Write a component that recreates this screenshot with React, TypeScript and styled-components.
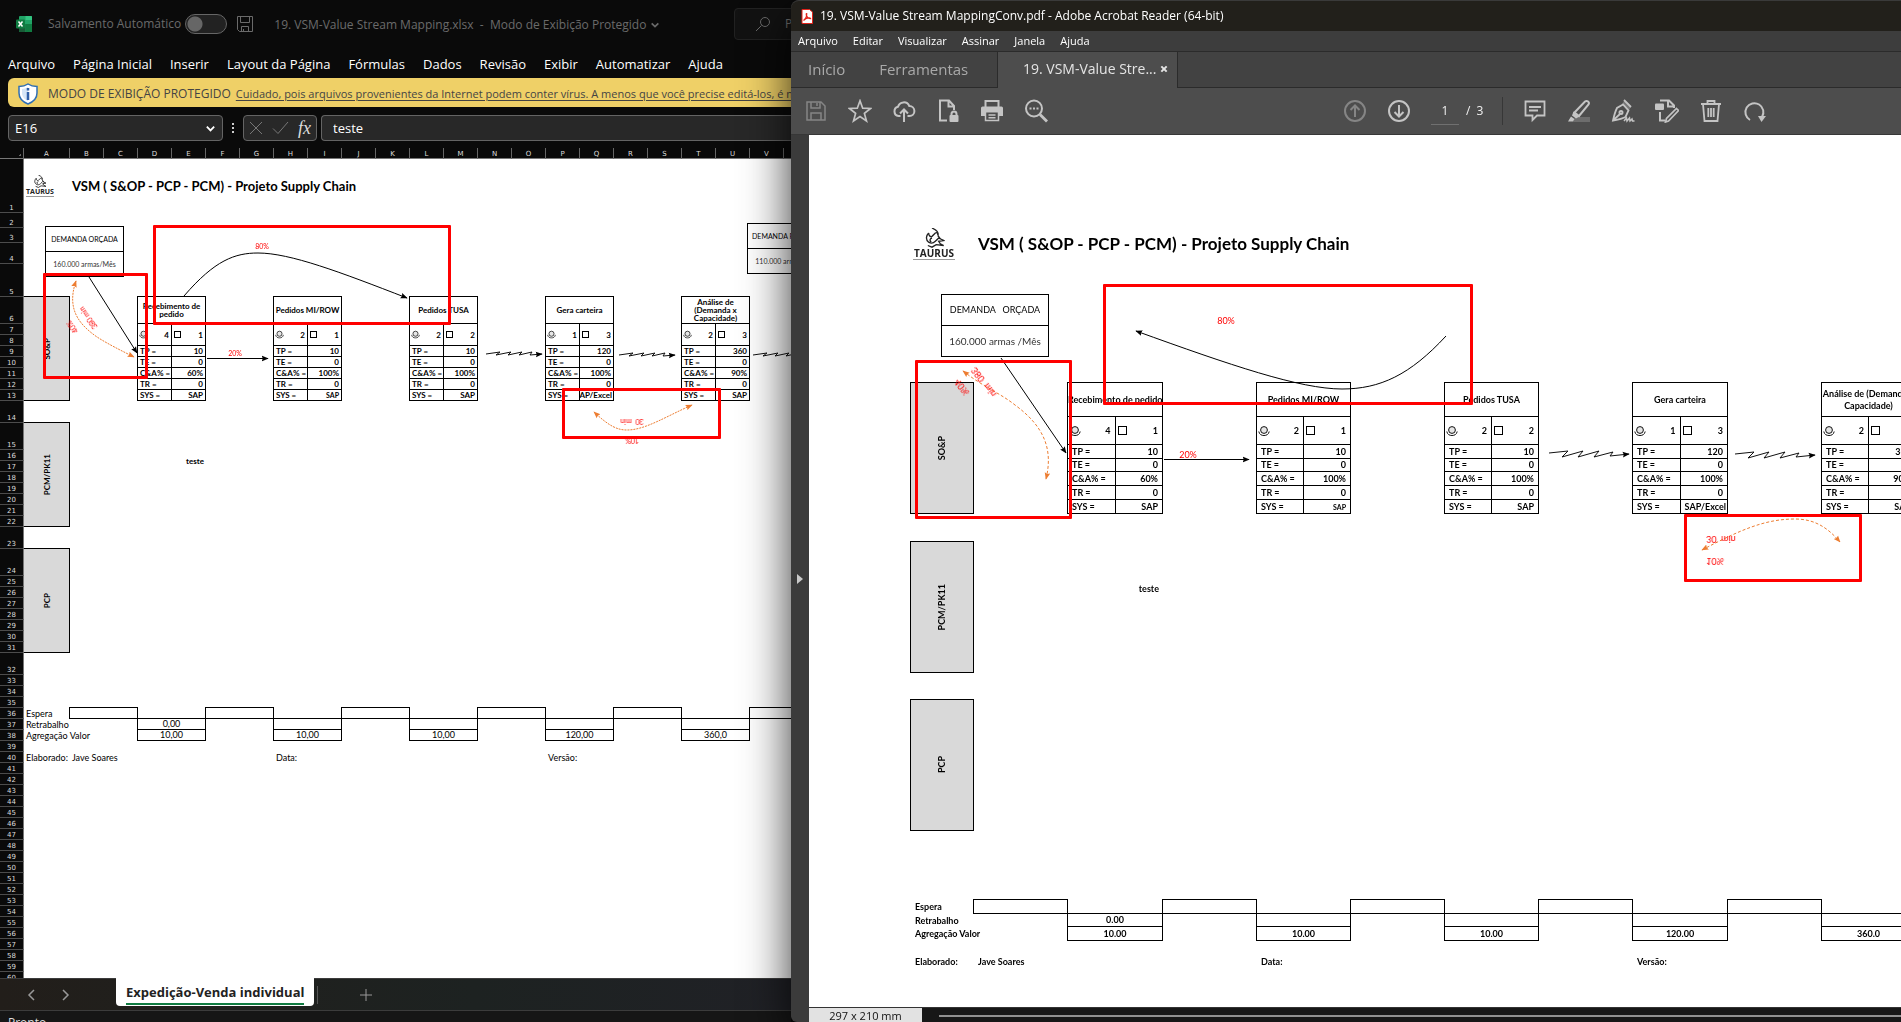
import React from "react";
import styled, { createGlobalStyle, css } from "styled-components";

const ui = `"Open Sans", "Noto Sans", sans-serif`;
const doc = `Lato, "Open Sans", sans-serif`;

const GlobalStyle = createGlobalStyle`
  *, *::before, *::after { box-sizing: border-box; }
  body { margin: 0; background: #0a0a0a; font-family: ${ui}; }
  button, input { font: inherit; color: inherit; }
  h1, h2 { margin: 0; }
`;

const Desktop = styled.div`
  display: grid;
  grid-template-columns: minmax(0, 791fr) minmax(0, 1110fr);
  height: 100vh;
  overflow: hidden;
`;

/* ---------- shared controls ---------- */

const PlainButton = styled.button`
  display: inline-flex;
  align-items: center;
  justify-content: center;
  flex: none;
  padding: 0;
  border: 0;
  background: none;
  white-space: nowrap;
  cursor: pointer;
`;

/* ---------- value stream map ---------- */

interface Process {
  name: string;
  people: number;
  machines: number;
  tp: string;
  ca: string;
  sys: string;
  smallSys?: boolean;
}

const processes: Process[] = [
  { name: "Recebimento de pedido", people: 4, machines: 1, tp: "10", ca: "60%", sys: "SAP" },
  { name: "Pedidos MI/ROW", people: 2, machines: 1, tp: "10", ca: "100%", sys: "SAP", smallSys: true },
  { name: "Pedidos TUSA", people: 2, machines: 2, tp: "10", ca: "100%", sys: "SAP" },
  { name: "Gera carteira", people: 1, machines: 3, tp: "120", ca: "100%", sys: "SAP/Excel" },
  { name: "Análise de (Demanda x Capacidade)", people: 2, machines: 3, tp: "360", ca: "90%", sys: "SAP" },
];

interface Metrics {
  columns: string;
  rows: string;
  tableRows: number[];
  font: number;
  labelWeight: number;
  pad: number;
  title: number;
  titleRow: number;
  logo: number;
  lanes: [string, string][];
  laneEdge: boolean;
  teste: string;
  timeline: number;
  footer: number;
  processRow: string;
  decimal: string;
  icon: number;
  headLine: number;
  heads: Record<number, string>;
}

const sheetMetrics: Metrics = {
  columns: "24px 46px repeat(24, 34px)",
  rows: "54px 15px 15px 21px 33px 27px repeat(7, 11px) 22px 27px repeat(7, 11px) 22px 27px repeat(7, 11px) 22px repeat(28, 11px)",
  tableRows: [27, 22, 11, 11, 11, 11, 11],
  font: 8,
  labelWeight: 400,
  pad: 2,
  title: 13,
  titleRow: 1,
  logo: 28,
  lanes: [["SO&P", "6 / 14"], ["PCM/PK11", "15 / 23"], ["PCP", "24 / 32"]],
  laneEdge: false,
  teste: "16 / 18",
  timeline: 36,
  footer: 40,
  processRow: "6 / 14",
  decimal: ",",
  icon: 9,
  headLine: 8,
  heads: { 0: "Recebimento de\npedido", 4: "Análise de\n(Demanda x\nCapacidade)" },
};

const pdfMetrics: Metrics = {
  columns:
    "102px 63px 47px 47px 47px 48px repeat(10, 47px) 48px 47px repeat(6, 47px)",
  rows: "77px 64px 107px 34px 28px 14px 13px 14px 14px 14px 28px 40px 14px 77px 27px 131px 69px 14px 13px 14px 14px 14px",
  tableRows: [34, 28, 14, 13, 14, 14, 14],
  font: 9,
  labelWeight: 700,
  pad: 4,
  title: 17,
  titleRow: 2,
  logo: 42,
  lanes: [["SO&P", "4 / 11"], ["PCM/PK11", "12 / 15"], ["PCP", "16 / 17"]],
  laneEdge: true,
  teste: "13 / 14",
  timeline: 18,
  footer: 22,
  processRow: "4 / 11",
  decimal: ".",
  icon: 12,
  headLine: 12,
  heads: { 4: "Análise de (Demanda x\nCapacidade)" },
};

const MapGrid = styled.div<{ $m: Metrics }>`
  position: relative;
  display: grid;
  grid-template-columns: ${(p) => p.$m.columns};
  grid-template-rows: ${(p) => p.$m.rows};
  font: 700 ${(p) => p.$m.font}px/10px ${doc};
  color: #000;
`;

const MapTitle = styled.h1<{ $m: Metrics }>`
  grid-area: ${(p) => p.$m.titleRow} / 3 / auto / span 12;
  align-self: center;
  padding-left: ${(p) => p.$m.pad}px;
  font: 700 ${(p) => p.$m.title}px/24px ${doc};
  color: #000;
  white-space: nowrap;
`;

const LogoSlot = styled.div<{ $m: Metrics }>`
  grid-area: ${(p) => p.$m.titleRow} / 2;
  align-self: center;
  padding-left: 2px;
`;

const Lane = styled.div<{ $rows: string; $edge: boolean }>`
  grid-column: 2;
  grid-row: ${(p) => p.$rows};
  display: flex;
  align-items: center;
  justify-content: center;
  margin: -1px 0 0 ${(p) => (p.$edge ? -1 : 0)}px;
  border: 1px solid #000;
  border-left-width: ${(p) => (p.$edge ? 1 : 0)}px;
  background: #d9d9d9;
`;

const LaneName = styled.span`
  writing-mode: vertical-rl;
  transform: rotate(180deg);
`;

const ProcessTable = styled.table<{ $column: number; $rows: string }>`
  grid-column: ${(p) => p.$column} / span 2;
  grid-row: ${(p) => p.$rows};
  margin: -1px 0 0 -1px;
  border: 0 solid #000;
  border-width: 1px 0 0 1px;
  border-collapse: separate;
  border-spacing: 0;
  table-layout: fixed;
  width: calc(100% + 1px);
  font: inherit;
  color: inherit;

  th, td {
    padding: 0;
    border: 0 solid #000;
    border-width: 0 1px 1px 0;
    font-weight: 700;
  }
`;

const TableRow = styled.tr<{ $height: number }>`
  height: ${(p) => p.$height}px;
`;

const HeadCell = styled.th<{ $line: number }>`
  text-align: center;
  vertical-align: middle;
  white-space: pre;
  line-height: ${(p) => p.$line}px;
`;

const Cell = styled.div<{ $pad: number; $end?: boolean; $small?: boolean }>`
  display: flex;
  justify-content: ${(p) => (p.$end ? "flex-end" : "flex-start")};
  padding: 0 ${(p) => p.$pad}px;
  overflow: hidden;
  white-space: nowrap;
  ${(p) => p.$small && css`font-size: 7px;`}
`;

const CountCell = styled.div<{ $pad: number }>`
  display: flex;
  align-items: center;
  justify-content: space-between;
  padding: 0 ${(p) => p.$pad}px 0 1px;
`;

const MachineBox = styled.span<{ $size: number }>`
  width: ${(p) => p.$size}px;
  height: ${(p) => p.$size}px;
  margin-left: 1px;
  border: 1px solid #000;
`;

const StepBox = styled.div<{ $row: number; $column: number; $weight: number }>`
  grid-area: ${(p) => p.$row} / ${(p) => p.$column} / auto / span 2;
  display: flex;
  align-items: center;
  justify-content: center;
  margin: -1px 0 0 -1px;
  border: 1px solid #000;
  font-size: 9px;
  font-weight: ${(p) => p.$weight};
`;

const Label = styled.span<{ $row: number | string; $column: number; $m: Metrics; $end?: boolean }>`
  grid-column: ${(p) => p.$column};
  grid-row: ${(p) => p.$row};
  align-self: center;
  justify-self: ${(p) => (p.$end ? "end" : "start")};
  padding: 0 ${(p) => p.$m.pad}px;
  font-size: ${(p) => (p.$end ? p.$m.font : 9)}px;
  font-weight: ${(p) => (p.$end ? 700 : p.$m.labelWeight)};
  white-space: nowrap;
`;

const Person = ({ size }: { size: number }) => (
  <svg width={size} height={size} viewBox="0 0 12 12" fill="none" stroke="#111">
    <circle cx="6" cy="5" r="3.4" fill="#e6e6e6" />
    <path d="M.8 6.5C1.4 9.6 3.6 10.500 6 10.500s4.6-.9 5.2-4" />
  </svg>
);

const LogoBox = styled.div<{ $width: number }>`
  display: flex;
  flex-direction: column;
  align-items: center;
  width: ${(p) => p.$width}px;
  border-bottom: 1px solid #999;
  font: 700 ${(p) => (p.$width > 30 ? 10 : 7)}px/${(p) => (p.$width > 30 ? 11 : 8)}px "Open Sans", sans-serif;
  color: #222;
`;

const TaurusLogo = ({ width }: { width: number }) => (
  <LogoBox $width={width}>
    <svg width={width / 2} height={width / 2 - 1} viewBox="0 0 24 24" fill="none" stroke="#222" strokeWidth="1.6">
      <path d="M9 0c6 3 8 5 7 9M5 6C2 9 1 14 5 17c3 2 6 1 8-1l4-4 6 3-6 1 2 3 4 2-9-1-5 3-5-2" />
      <path d="M5 6c0 3 2 5 4 4l4-4c2-1 3 0 3 2M8 17c-2-2-2-4 1-5M16 9l3 4" />
    </svg>
    TAURUS
  </LogoBox>
);

function ValueStream({ m }: { m: Metrics }) {
  const n = (v: string) => v.replace(".", m.decimal);
  const [head, counts, ...rest] = m.tableRows;
  const finals = ["10.00", "10.00", "10.00", "120.00", "360.0"].map(n);
  return (
    <>
      <LogoSlot $m={m}><TaurusLogo width={m.logo} /></LogoSlot>
      <MapTitle $m={m}>VSM ( S&OP - PCP - PCM) - Projeto Supply Chain</MapTitle>
      {m.lanes.map(([name, rows]) => (
        <Lane key={name} $rows={rows} $edge={m.laneEdge}><LaneName>{name}</LaneName></Lane>
      ))}
      {processes.map((p, i) => {
        const data = [["TP =", p.tp], ["TE =", "0"], ["C&A% =", p.ca], ["TR =", "0"], ["SYS =", p.sys]];
        return (
          <ProcessTable key={p.name} $column={5 + 4 * i} $rows={m.processRow}>
            <tbody>
              <TableRow $height={head}>
                <HeadCell colSpan={2} $line={m.headLine}>{m.heads[i] ?? p.name}</HeadCell>
              </TableRow>
              <TableRow $height={counts}>
                <td><CountCell $pad={m.pad}><Person size={m.icon} />{p.people}</CountCell></td>
                <td><CountCell $pad={m.pad}><MachineBox $size={m.icon > 9 ? 9 : 7} />{p.machines}</CountCell></td>
              </TableRow>
              {data.map(([k, v], r) => (
                <TableRow key={k} $height={rest[r]}>
                  <td><Cell $pad={m.pad}>{k}</Cell></td>
                  <td><Cell $pad={v.length > 6 ? 1 : m.pad} $end $small={r === 4 && p.smallSys}>{v}</Cell></td>
                </TableRow>
              ))}
            </tbody>
          </ProcessTable>
        );
      })}
      <Label $row={m.teste} $column={6} $m={m} $end>teste</Label>
      <Label $row={m.timeline} $column={2} $m={m}>Espera</Label>
      <Label $row={m.timeline + 1} $column={2} $m={m}>Retrabalho</Label>
      <Label $row={m.timeline + 2} $column={2} $m={m}>Agregação Valor</Label>
      {[0, 1, 2, 3, 4, 5].map((i) => (
        <StepBox key={i} $row={m.timeline} $column={3 + 4 * i} $weight={m.labelWeight} />
      ))}
      {finals.map((v, i) => (
        <React.Fragment key={i}>
          <StepBox $row={m.timeline + 1} $column={5 + 4 * i} $weight={m.labelWeight}>{i === 0 && n("0.00")}</StepBox>
          <StepBox $row={m.timeline + 2} $column={5 + 4 * i} $weight={m.labelWeight}>{v}</StepBox>
        </React.Fragment>
      ))}
      <Label $row={m.footer} $column={2} $m={m}>Elaborado:</Label>
      <Label $row={m.footer} $column={3} $m={m}>Jave Soares</Label>
      <Label $row={m.footer} $column={9} $m={m}>Data:</Label>
      <Label $row={m.footer} $column={17} $m={m}>Versão:</Label>
    </>
  );
}

/* ---------- shapes floating over the map ---------- */

const Connectors = styled.svg`
  position: absolute;
  left: 0;
  top: 0;
  overflow: hidden;
  pointer-events: none;
`;

const DemandBox = styled.div<{ $x: number; $y: number; $w: number; $row: number; $size: number; $head: number }>`
  position: absolute;
  left: ${(p) => p.$x}px;
  top: ${(p) => p.$y}px;
  width: ${(p) => p.$w}px;
  border: 1px solid #000;
  background: #fff;
  font: 400 ${(p) => p.$size}px/${(p) => p.$row}px ${doc};
  text-align: center;
  white-space: pre;
  overflow: hidden;

  & > div:first-child {
    font-size: ${(p) => p.$head}px;
  }

  & > div + div {
    border-top: 1px solid #000;
    color: #333;
  }
`;

const Frame = styled.div<{ $x: number; $y: number; $w: number; $h: number }>`
  position: absolute;
  left: ${(p) => p.$x}px;
  top: ${(p) => p.$y}px;
  width: ${(p) => p.$w}px;
  height: ${(p) => p.$h}px;
  border: 3px solid #f00;
  border-radius: 1px;
`;

const Note = styled.span<{ $x: number; $y: number; $turn?: number; $flip?: boolean; $soft?: boolean }>`
  position: absolute;
  left: ${(p) => p.$x}px;
  top: ${(p) => p.$y}px;
  font: 400 ${(p) => (p.$soft ? 7 : 9)}px/10px ${doc};
  color: #f00;
  white-space: pre;
  transform: translate(-50%, -50%) rotate(${(p) => p.$turn ?? 0}deg) rotateX(${(p) => (p.$flip ? 180 : 0)}deg);
`;

const Markers = ({ id, size }: { id: string; size: number }) => (
  <defs>
    {[["k", "#000"], ["o", "#ed7d31"]].map(([key, fill]) => (
      <marker key={key} id={`${id}-${key}`} viewBox="0 0 10 10" refX="9" refY="5" markerWidth={size} markerHeight={size} markerUnits="userSpaceOnUse" orient="auto-start-reverse">
        <path d="M0 1 10 5 0 9 1.500 5Z" fill={fill} />
      </marker>
    ))}
  </defs>
);

/* ---------- spreadsheet window ---------- */

const SheetWindow = styled.section`
  display: flex;
  flex-direction: column;
  min-width: 0;
  overflow: hidden;
  background: #0a0a0a;
  color: #fff;
  white-space: nowrap;
`;

const SheetTitleBar = styled.header`
  display: flex;
  flex: none;
  align-items: center;
  height: 48px;
  padding-left: 16px;
  font-size: 12px;
  line-height: 16px;
  color: #6a6a6a;
`;

const AutoSave = styled.label`
  display: flex;
  align-items: center;
  gap: 4px;
  margin: 0 10px 0 16px;
`;

const Toggle = styled.input`
  appearance: none;
  width: 42px;
  height: 20px;
  margin: 0;
  border: 1px solid #666;
  border-radius: 10px;
  background: radial-gradient(circle at 9px 9px, #666 0 7px, #222 8px);
`;

const FileName = styled.button`
  display: flex;
  align-items: center;
  gap: 4px;
  margin-left: 21px;
  padding: 2px 0 0;
  border: 0;
  background: none;
  white-space: pre;
`;

const SearchBox = styled.label`
  display: flex;
  align-items: center;
  gap: 14px;
  flex: none;
  width: 400px;
  height: 32px;
  margin-left: auto;
  margin-right: -343px;
  padding-left: 20px;
  border: 1px solid #222;
  border-radius: 4px;
  background: #121212;
`;

const BareInput = styled.input`
  flex: 1;
  min-width: 0;
  padding: 0;
  border: 0;
  outline: 0;
  background: none;
  &::placeholder { color: #6a6a6a; }
`;

const RibbonTabs = styled.nav`
  display: flex;
  flex: none;
  align-items: center;
  gap: 18px;
  height: 30px;
  padding: 2px 8px 0;
  font-size: 13px;
  line-height: 18px;
`;

const ProtectedBanner = styled.div`
  display: flex;
  flex: none;
  align-items: center;
  gap: 5px;
  height: 29px;
  margin-left: 8px;
  padding: 2px 0 0 10px;
  border-radius: 6px 0 0 6px;
  background: #efd067;
  font-size: 12px;
  line-height: 16px;
  color: #444;

  svg { flex: none; margin-right: 5px; }
  a { font-size: 11px; color: inherit; text-underline-offset: 2px; }
`;

const FormulaBar = styled.div`
  display: flex;
  flex: none;
  align-items: center;
  height: 41px;
  padding: 1px 0 0 8px;
  font-size: 13px;
`;

const Field = styled.div<{ $width?: number; $open?: boolean; $pad: number }>`
  display: flex;
  align-items: center;
  flex: ${(p) => (p.$width ? `0 0 ${p.$width}px` : "1 1 0")};
  height: 26px;
  padding: 0 ${(p) => p.$pad}px;
  border: 1px solid #646464;
  border-radius: ${(p) => (p.$open ? "4px 0 0 4px" : "4px")};
  border-right-width: ${(p) => (p.$open ? 0 : 1)}px;
  background: #282828;
  justify-content: space-between;
`;

const Dots = styled.span`
  width: 2px;
  height: 11px;
  margin: 0 9px;
  background: repeating-linear-gradient(#ccc 0 2px, transparent 2px 4px);
`;

const FormulaGap = styled.span`
  flex: 0 0 4px;
`;

const FxButton = styled(PlainButton)`
  font: italic 400 18px/20px "Liberation Serif", serif;
  color: #ddd;
`;

const ColumnHeads = styled.div`
  display: grid;
  flex: none;
  grid-template-columns: ${sheetMetrics.columns};
  height: 11px;
  border-bottom: 1px solid #777;
  font: 400 7px/12px "DejaVu Sans", sans-serif;
  color: #ddd;
  text-align: center;
`;

const ColumnHead = styled.span`
  border-right: 1px solid #666;
`;

const Corner = styled.span`
  border-right: 1px solid #666;
  background: linear-gradient(135deg, transparent 50%, #666 50%) 18px 5px / 3px 3px no-repeat;
`;

const SheetBody = styled.div`
  flex: 1;
  min-height: 0;
  overflow: hidden;
  background: #fff;
`;

const RowHead = styled.span<{ $row: number }>`
  grid-area: ${(p) => p.$row} / 1;
  display: flex;
  align-items: flex-end;
  justify-content: center;
  border-right: 1px solid #777;
  border-bottom: 1px solid #4c4c4c;
  background: #0a0a0a;
  font: 400 7px/7px "DejaVu Sans", sans-serif;
  color: #ddd;
`;

const SheetTabs = styled.footer`
  display: flex;
  flex: none;
  align-items: center;
  height: 33px;
  padding-left: 26px;
  border: 0 solid #3c3c3c;
  border-width: 1px 0;
  background: linear-gradient(90deg, #221e1a, #1d2221 60%, #202126);
  color: #999;
`;

const NavPair = styled.div`
  display: flex;
  gap: 21px;
`;

const ActiveTab = styled.button`
  align-self: flex-start;
  height: 28px;
  margin: -1px 3px 0 45px;
  padding: 0 10px;
  border: 0;
  border-radius: 0 0 4px 4px;
  background: #fff;
  font-size: 13px;
  font-weight: 700;
  line-height: 24px;
  color: #222;

  span { display: block; height: 25px; border-bottom: 2px solid #107c41; }
`;

const TabRule = styled.span`
  width: 1px;
  height: 18px;
  margin-right: 42px;
  background: #555;
`;

const StatusLine = styled.div`
  flex: none;
  height: 11px;
  padding: 4px 8px 0;
  background: #161616;
  font-size: 12px;
  line-height: 16px;
  color: #ddd;
  overflow: hidden;
`;

const Chevron = ({ d, size = 12, w = 1.5 }: { d: string; size?: number; w?: number }) => (
  <svg width={size} height={size} viewBox="0 0 12 12" fill="none" stroke="currentColor" strokeWidth={w}><path d={d} /></svg>
);

const ZigZag = ({ points, marker }: { points: string; marker: string }) => (
  <polyline points={points} fill="none" stroke="#111" markerEnd={`url(#${marker})`} />
);

const ribbon = ["Arquivo", "Página Inicial", "Inserir", "Layout da Página", "Fórmulas", "Dados", "Revisão", "Exibir", "Automatizar", "Ajuda"];
const letters = "ABCDEFGHIJKLMNOPQRSTUV".split("");

const sheetZig = (x: number, y: number) =>
  [[0, 0], [14, -2], [10, 1], [25, -2], [22, 1], [36, -2], [33, 1], [46, -2], [44, 1], [56, 0]]
    .map(([dx, dy]) => `${x + dx},${y + dy}`).join(" ");
const pdfZig = (x: number, y: number) =>
  [[0, 0], [19, -2], [13, 4], [34, -2], [29, 4], [50, -2], [45, 4], [64, -1], [61, 3], [80, 1]]
    .map(([dx, dy]) => `${x + dx},${y + dy}`).join(" ");

function Spreadsheet() {
  return (
    <SheetWindow>
      <SheetTitleBar>
        <svg width="16" height="16" viewBox="0 0 16 16">
          <rect x="3" width="13" height="16" rx="1" fill="#21a366" />
          <path d="M9.500 0H15a1 1 0 0 1 1 1v3H9.500Z" fill="#33c481" />
          <path d="M3 8h6.500v8H4a1 1 0 0 1-1-1Z" fill="#185c37" />
          <path d="M9.500 8H16v7a1 1 0 0 1-1 1H9.500Z" fill="#107c41" />
          <rect y="3.500" width="9" height="9" rx="1" fill="#107c41" />
          <path d="m2.500 5.500 4 5m0-5-4 5" stroke="#fff" strokeWidth="1.500" />
        </svg>
        <AutoSave>Salvamento Automático <Toggle type="checkbox" /></AutoSave>
        <PlainButton aria-label="Salvar">
          <svg width="16" height="16" viewBox="0 0 16 16" fill="none" stroke="currentColor">
            <path d="M.5.5h15v15H2.500l-2-2ZM3.500.5v6h9v-6M4.500 15.500v-5h7v5M6.500 13v2.500" />
          </svg>
        </PlainButton>
        <FileName>
          {"19. VSM-Value Stream Mapping.xlsx  -  Modo de Exibição Protegido"}
          <Chevron d="m2 4 4 4 4-4" size={10} w={2} />
        </FileName>
        <SearchBox>
          <svg width="16" height="16" viewBox="0 0 16 16" fill="none" stroke="currentColor"><circle cx="10" cy="6" r="4.500" /><path d="m6.500 9.500-5.500 5.500" /></svg>
          <BareInput placeholder="Pesquisar" aria-label="Pesquisar" />
        </SearchBox>
      </SheetTitleBar>
      <RibbonTabs>{ribbon.map((r) => <PlainButton key={r}>{r}</PlainButton>)}</RibbonTabs>
      <ProtectedBanner>
        <svg width="20" height="22" viewBox="0 0 20 22">
          <path d="M10 1c3 2 6 2.500 9 2.500V10c0 5-4 9-9 11-5-2-9-6-9-11V3.500C4 3.500 7 3 10 1Z" fill="#fff" stroke="#2f6fb5" strokeWidth="1.500" />
          <path d="M10 4v14c-3.500-1.500-6-4.500-6-8V6c2 0 4-.8 6-2Z" fill="#d6e6f7" />
          <path d="M10 5v2.500M10 9v8" stroke="#2f5fa8" strokeWidth="2.500" />
        </svg>
        <span>MODO DE EXIBIÇÃO PROTEGIDO</span>
        <a href="#editar">Cuidado, pois arquivos provenientes da Internet podem conter vírus. A menos que você precise editá-los, é mais</a>
      </ProtectedBanner>
      <FormulaBar>
        <Field $width={215} $pad={6}>
          <BareInput defaultValue="E16" aria-label="Caixa de nome" />
          <PlainButton aria-label="Lista de nomes"><Chevron d="m2 4 4 4 4-4" size={11} w={2} /></PlainButton>
        </Field>
        <Dots />
        <Field $width={74} $pad={5}>
          <PlainButton aria-label="Cancelar"><svg width="14" height="14" viewBox="0 0 14 14" stroke="#777"><path d="m1 1 12 12M13 1 1 13" /></svg></PlainButton>
          <PlainButton aria-label="Inserir"><svg width="17" height="14" viewBox="0 0 17 14" fill="none" stroke="#777"><path d="m1 7.500 5 5L16 1" /></svg></PlainButton>
          <FxButton>fx</FxButton>
        </Field>
        <FormulaGap />
        <Field $open $pad={11}><BareInput defaultValue="teste" aria-label="Barra de fórmulas" /></Field>
      </FormulaBar>
      <ColumnHeads>
        <Corner />
        {letters.map((l) => <ColumnHead key={l}>{l}</ColumnHead>)}
      </ColumnHeads>
      <SheetBody>
        <MapGrid $m={sheetMetrics}>
          {Array.from({ length: 60 }, (_, i) => <RowHead key={i} $row={i + 1}>{i + 1}</RowHead>)}
          <ValueStream m={sheetMetrics} />
          <DemandBox $x={45} $y={67} $w={79} $row={24} $size={7} $head={7}><div>DEMANDA ORÇADA</div><div>160.000 armas/Mês</div></DemandBox>
          <DemandBox $x={747} $y={64} $w={79} $row={24} $size={7} $head={7}><div>DEMANDA PREVISTA</div><div>110.000 armas/Mês</div></DemandBox>
          <Connectors width="840" height="300" fill="none">
            <Markers id="s" size={7} />
            <g stroke="#000">
              <path d="M89 118 137 194" markerEnd="url(#s-k)" />
              <path d="M184 137C215 101 235 94 258 94C290 94 340 113 407 139" markerEnd="url(#s-k)" />
              <path d="M207 199.500H268" markerEnd="url(#s-k)" />
            </g>
            <g stroke="#ed7d31" strokeDasharray="2 1">
              <path d="M76 122C66 151 80 166 97 178C108 185 120 191 134 198" markerStart="url(#s-o)" markerEnd="url(#s-o)" />
              <path d="M594 253C610 268 618 271 627 271C645 271 665 258 692 246" markerStart="url(#s-o)" markerEnd="url(#s-o)" />
            </g>
            <ZigZag points={sheetZig(486, 195)} marker="s-k" />
            <ZigZag points={sheetZig(619, 196)} marker="s-k" />
            <ZigZag points={sheetZig(753, 196)} marker="s-k" />
          </Connectors>
          <Note $x={262} $y={87} $soft>80%</Note>
          <Note $x={235} $y={194} $soft>20%</Note>
          <Note $x={88} $y={159} $turn={234} $soft>380 min</Note>
          <Note $x={72} $y={168} $turn={234} $soft>40%</Note>
          <Note $x={632} $y={263} $turn={180} $soft>30  min</Note>
          <Note $x={632} $y={282} $turn={180} $soft>10%</Note>
          <Frame $x={153} $y={66} $w={298} $h={100} />
          <Frame $x={43} $y={114} $w={105} $h={106} />
          <Frame $x={562} $y={229} $w={159} $h={51} />
        </MapGrid>
      </SheetBody>
      <SheetTabs>
        <NavPair>
          <PlainButton aria-label="Anterior"><Chevron d="M8 1 3 6l5 5" /></PlainButton>
          <PlainButton aria-label="Próxima"><Chevron d="m4 1 5 5-5 5" /></PlainButton>
        </NavPair>
        <ActiveTab><span>Expedição-Venda individual</span></ActiveTab>
        <TabRule />
        <PlainButton aria-label="Nova planilha"><Chevron d="M6 0v12M0 6h12" w={1} /></PlainButton>
      </SheetTabs>
      <StatusLine>Pronto</StatusLine>
    </SheetWindow>
  );
}

/* ---------- PDF reader window ---------- */

const ReaderWindow = styled.section`
  position: relative;
  z-index: 1;
  display: flex;
  flex-direction: column;
  min-width: 0;
  border-top: 1px solid #3a3a3a;
  border-radius: 8px 0 0 6px;
  background: #3b3b3b;
  box-shadow: 0 16px 48px rgba(0, 0, 0, 0.8);
  white-space: nowrap;
`;

const ReaderTitle = styled.header`
  display: flex;
  flex: none;
  align-items: center;
  gap: 7px;
  height: 30px;
  padding-left: 10px;
  border-radius: 8px 0 0 0;
  background: #22201b;
  font-size: 12px;
  line-height: 16px;
  color: #fff;
`;

const ReaderMenu = styled.nav`
  display: flex;
  flex: none;
  gap: 15px;
  height: 21px;
  padding-left: 7px;
  border-bottom: 1px solid #2b2b2b;
  background: #3d3d3d;
  font-size: 11px;
  line-height: 16px;
  color: #fff;
`;

const ReaderTabs = styled.div`
  display: flex;
  flex: none;
  height: 36px;
  background: #424242;
  box-shadow: inset 0 -1px #2b2b2b;
  font-size: 15px;
  line-height: 20px;
  color: #a9a9a9;
`;

const HomeTabs = styled.div`
  display: flex;
  gap: 34px;
  width: 206px;
  padding: 0 0 2px 17px;
`;

const FileTab = styled.div`
  display: flex;
  align-items: center;
  justify-content: space-between;
  width: 181px;
  padding: 0 9px 2px 25px;
  border: 0 solid #2b2b2b;
  border-width: 0 1px;
  background: #4d4d4d;
  font-size: 14px;
  color: #e4e4e4;
`;

const ReaderTools = styled.div`
  display: flex;
  flex: none;
  align-items: center;
  height: 47px;
  padding-left: 13px;
  border-bottom: 1px solid #373737;
  background: #4d4d4d;
  color: #c4c4c4;
`;

const ToolGroup = styled.div`
  display: flex;
  align-items: center;
  gap: 20px;
`;

const Spacer = styled.span<{ $grow: number }>`
  flex: ${(p) => p.$grow} 1 0;
`;

const ToolButton = styled(PlainButton)<{ $dim?: boolean }>`
  width: 24px;
  height: 24px;
  color: ${(p) => (p.$dim ? "#858585" : "inherit")};
`;

const Pager = styled.label`
  display: flex;
  align-items: center;
  gap: 7px;
  width: 51px;
  font-size: 12px;
  line-height: 16px;
  color: #f0f0f0;

  input {
    flex: none;
    width: 28px;
    height: 27px;
    padding: 0;
    border: 0;
    border-bottom: 1px solid #707070;
    background: none;
    text-align: center;
  }
`;

const ToolRule = styled.span`
  width: 1px;
  height: 28px;
  background: #373737;
`;

const ReaderBody = styled.div`
  display: flex;
  flex: 1;
  min-height: 0;
`;

const SideStrip = styled.div`
  display: flex;
  align-items: center;
  justify-content: center;
  flex: 0 0 18px;
  color: #c8c8c8;
`;

const PageColumn = styled.div`
  display: flex;
  flex-direction: column;
  flex: 1;
  min-width: 0;
`;

const PageView = styled.main`
  flex: 1;
  min-height: 0;
  overflow: hidden;
  background: #fff;
`;

const PageFooter = styled.footer`
  display: flex;
  flex: none;
  height: 15px;
  border-top: 1px solid #333;
  background: #171717;
`;

const PageSize = styled.span`
  width: 113px;
  background: #e2e2e2;
  font-size: 11px;
  line-height: 15px;
  color: #111;
  text-align: center;
`;

const ScrollTrack = styled.span`
  flex: 1;
  height: 2px;
  margin: 7px 0 0 17px;
  background: #909090;
`;

const Tool = ({ label, dim, children }: { label: string; dim?: boolean; children: React.ReactNode }) => (
  <ToolButton aria-label={label} $dim={dim}>
    <svg width="24" height="24" viewBox="0 0 24 24" fill="none" stroke="currentColor" strokeWidth="2">{children}</svg>
  </ToolButton>
);

const menus = ["Arquivo", "Editar", "Visualizar", "Assinar", "Janela", "Ajuda"];

function Reader() {
  return (
    <ReaderWindow>
      <ReaderTitle>
        <svg width="12" height="15" viewBox="0 0 12 15">
          <path d="M1 .5h7.500L11.500 3v11.500H1Z" fill="#fff" stroke="#e2231a" />
          <path d="M2.500 11.500C5 9.500 6 7 5.700 4.500c-1-.2-.6 5 4 5.200 0-1.400-4-1.200-7.200 1.800Z" fill="none" stroke="#e2231a" strokeWidth="1.200" />
        </svg>
        19. VSM-Value Stream MappingConv.pdf - Adobe Acrobat Reader (64-bit)
      </ReaderTitle>
      <ReaderMenu>{menus.map((x) => <PlainButton key={x}>{x}</PlainButton>)}</ReaderMenu>
      <ReaderTabs>
        <HomeTabs><PlainButton>Início</PlainButton><PlainButton>Ferramentas</PlainButton></HomeTabs>
        <FileTab>
          19. VSM-Value Stre...
          <PlainButton aria-label="Fechar"><Chevron d="m2 2 8 8M10 2l-8 8" size={8} w={3} /></PlainButton>
        </FileTab>
      </ReaderTabs>
      <ReaderTools>
        <ToolGroup>
          <Tool label="Salvar" dim><path d="M3 3h14l4 4v14H3ZM7 3v6h9V3M13 4v3M7 21v-7h10v7" strokeWidth="1.500" /></Tool>
          <Tool label="Favorito"><path d="m12 1.800 2.700 7.400 7.800.3-6.100 4.900 2.100 7.600-6.500-4.400L5.500 22l2.100-7.600-6.100-4.900 7.800-.3Z" strokeWidth="1.700" /></Tool>
          <Tool label="Enviar"><path d="M8.500 17H6.500A4.700 4.700 0 0 1 6 7.800 6 6 0 0 1 17.300 7 5 5 0 0 1 17.500 17h-2M12 23V11M8 14.500l4-4 4 4" /></Tool>
          <Tool label="Proteger">
            <path d="M11 21.500H4v-20h9l5 5.500v4M12.500 2v5.500H18" />
            <rect x="13.500" y="16" width="9" height="7" rx="1" fill="currentColor" stroke="none" /><path d="M15.500 17v-2a2.500 2.500 0 0 1 5 0v2" />
          </Tool>
          <Tool label="Imprimir">
            <path d="M5.500 8V2h13v6" /><path d="M1 9a1.500 1.500 0 0 1 1.500-1.500h19A1.500 1.500 0 0 1 23 9v8h-4v-3.500H5V17H1Z" fill="currentColor" stroke="none" />
            <path d="M5.500 13v8.500h13V13M8.500 16h7M8.500 18.800h7" strokeWidth="1.500" />
          </Tool>
          <Tool label="Localizar"><circle cx="10" cy="9.500" r="8" /><path d="m16 15.500 7 7" strokeWidth="2.800" /><path d="M5.500 9.500h2m1.500 0h2m1.500 0h2" /></Tool>
        </ToolGroup>
        <Spacer $grow={11} />
        <ToolGroup>
          <Tool label="Página anterior" dim><circle cx="12" cy="12" r="10" /><path d="M12 18V7M7.500 11 12 6.500l4.500 4.500" /></Tool>
          <Tool label="Próxima página"><circle cx="12" cy="12" r="10" /><path d="M12 6v11M7.500 13l4.500 4.500 4.500-4.500" /></Tool>
          <Pager><input defaultValue="1" aria-label="Página" /><span>/ &nbsp;3</span></Pager>
          <ToolRule />
          <Tool label="Comentar"><path d="M2.500 2.500h19v14H14L9.500 21v-4.500h-7ZM6 8h12M6 11.500h9" strokeWidth="1.800" /></Tool>
          <Tool label="Realçar">
            <path d="M8 18h15v5H6Z" fill="#6d6d6d" stroke="none" />
            <path d="M7.500 13.500 18 2.500c2-1.500 5 .5 3.500 3L12 17Z" /><path d="m6.500 12.500 6 5-3.500 2-4-3ZM1 22.500l3-5 3.500 2.500-1.500 2.500Z" fill="currentColor" stroke="none" />
          </Tool>
          <Tool label="Assinar">
            <path d="m13 2 7 6-2 3-7-6Z" fill="#777" stroke="none" />
            <path d="m13 1 7 7M12 5.500 6 9C4 13 3 17 2 21.500 7 20.500 11 20 14.500 18l3-6.500ZM2.500 21l6.500-6" strokeWidth="1.800" /><circle cx="10" cy="13.500" r="1.500" /><path d="m13 22 2.500-3 .5 3 2.500-3 .5 3 2-2 .5 2h2" strokeWidth="1.500" />
          </Tool>
          <Tool label="Editar PDF">
            <path d="M5 1.500h9l5 5V9M13 2v5.500h6M5 13v8.500h5" /><rect x="0" y="4.500" width="9" height="6.500" rx="1" fill="currentColor" stroke="none" />
            <path d="m21.500 9.500 2 2L13.500 22l-3 1 1-3.500Z" strokeWidth="1.700" />
          </Tool>
          <Tool label="Excluir"><path d="M2 5h20M8.500 5V2h7v3M4 5l1.500 17h13L20 5M9.300 9v9M12 9v9M14.700 9v9" strokeWidth="1.800" /></Tool>
          <Tool label="Girar"><path d="M7 21a9 9 0 1 1 12-3" /><path d="M15 17h8l-4.500 6Z" fill="currentColor" stroke="none" /></Tool>
        </ToolGroup>
        <Spacer $grow={5} />
      </ReaderTools>
      <ReaderBody>
        <SideStrip><svg width="6" height="10" viewBox="0 0 6 10"><path d="M0 0 6 5 0 10Z" fill="currentColor" /></svg></SideStrip>
        <PageColumn>
          <PageView>
            <MapGrid $m={pdfMetrics}>
              <ValueStream m={pdfMetrics} />
              <DemandBox $x={132} $y={159} $w={108} $row={30} $size={10} $head={9}><div>{"DEMANDA   ORÇADA"}</div><div>160.000 armas /Mês</div></DemandBox>
              <Connectors width="1092" height="480" fill="none">
                <Markers id="p" size={7} />
                <g stroke="#000">
                  <path d="M192 223 257 318" markerEnd="url(#p-k)" />
                  <path d="M327 196C421 230 491 254 533 254C571 254 601 240 637 201" markerStart="url(#p-k)" />
                  <path d="M355 324.500H440" markerEnd="url(#p-k)" />
                </g>
                <g stroke="#ed7d31" strokeDasharray="3 2">
                  <path d="M154 236C176 253 191 258 206 270C236 292 244 315 237 344" markerStart="url(#p-o)" markerEnd="url(#p-o)" />
                  <path d="M893 415C931 395 956 384 986 384C1006 384 1019 393 1031 407" markerStart="url(#p-o)" markerEnd="url(#p-o)" />
                </g>
                <ZigZag points={pdfZig(740, 318)} marker="p-k" />
                <ZigZag points={pdfZig(926, 319)} marker="p-k" />
              </Connectors>
              <Note $x={417} $y={186}>80%</Note>
              <Note $x={379} $y={320}>20%</Note>
              <Note $x={175} $y={247} $turn={52} $flip>380  min</Note>
              <Note $x={153} $y={252} $turn={52} $flip>40%</Note>
              <Note $x={912} $y={404} $flip>30  min</Note>
              <Note $x={906} $y={426} $flip>10%</Note>
              <Frame $x={294} $y={149} $w={370} $h={121} />
              <Frame $x={106} $y={225} $w={157} $h={159} />
              <Frame $x={875} $y={379} $w={178} $h={68} />
            </MapGrid>
          </PageView>
          <PageFooter><PageSize>297 x 210 mm</PageSize><ScrollTrack /></PageFooter>
        </PageColumn>
      </ReaderBody>
    </ReaderWindow>
  );
}

export default function App() {
  return (
    <>
      <GlobalStyle />
      <Desktop>
        <Spreadsheet />
        <Reader />
      </Desktop>
    </>
  );
}
